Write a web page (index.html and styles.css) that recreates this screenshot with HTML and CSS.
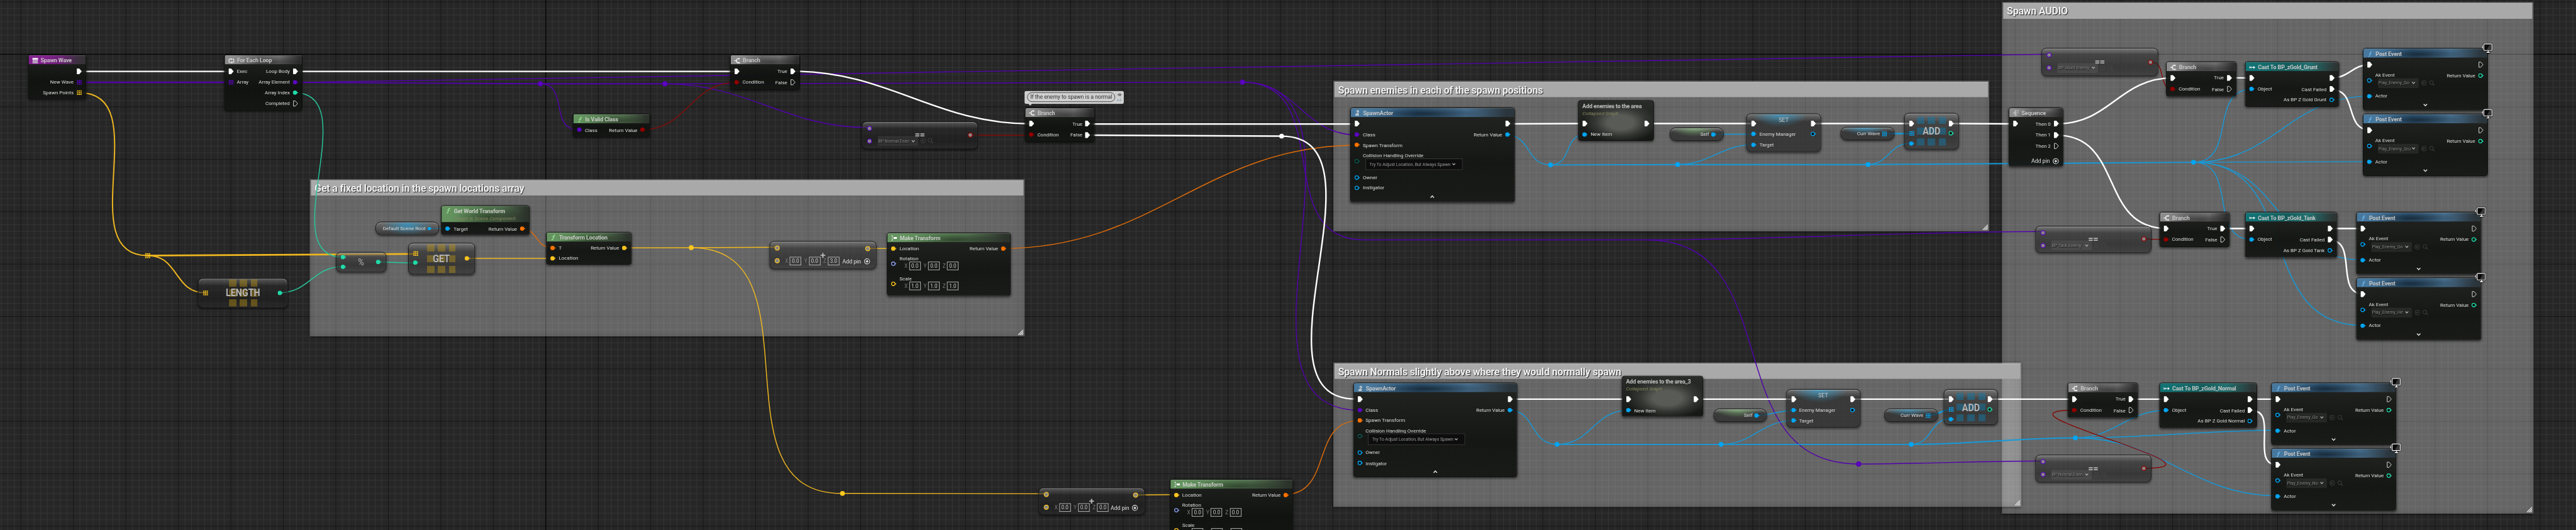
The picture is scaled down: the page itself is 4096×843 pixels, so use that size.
FILE: index.html
```html
<!DOCTYPE html>
<html lang="en">
<head>
<meta charset="utf-8">
<title>Spawn Wave - Event Graph</title>
<link rel="stylesheet" href="styles.css">
</head>
<body>
<svg class="defs" aria-hidden="true">
  <symbol id="exec" viewBox="0 0 9 11"><path d="M1.2.8h3.3L8.6 5.5 4.5 10.2H1.2Q.5 10.2.5 9.500V1.500Q.5.8 1.2.8z" fill="#fff"/></symbol>
  <symbol id="exec-o" viewBox="0 0 9 11"><path d="M1.2 1.200h2.900L8 5.500 4.100 9.800H1.200z" fill="none" stroke="#ddd" stroke-width="1"/></symbol>
  <symbol id="dot" viewBox="0 0 9 11"><circle cx="3.600" cy="5.500" r="3.500" fill="currentColor"/><path d="M7 4l1.900 1.500L7 7z" fill="currentColor"/></symbol>
  <symbol id="ring" viewBox="0 0 9 11"><circle cx="3.600" cy="5.500" r="2.900" fill="#0b0d0c" stroke="currentColor" stroke-width="1.400"/><path d="M7 4l1.900 1.500L7 7z" fill="currentColor"/></symbol>
  <symbol id="ringc" viewBox="0 0 9 11"><circle cx="4.500" cy="5.500" r="3.500" fill="#868686" stroke="currentColor" stroke-width="1.300"/></symbol>
  <symbol id="arr" viewBox="0 0 9 11"><path d="M.7 1.800h2v2h-2zM3.500 1.800h2v2h-2zM6.300 1.800h2v2h-2zM.7 4.600h2v2h-2zM3.500 4.600h2v2h-2zM6.300 4.600h2v2h-2zM.7 7.400h2v2h-2zM3.500 7.400h2v2h-2zM6.300 7.400h2v2h-2z" fill="currentColor"/></symbol>
  <symbol id="fn" viewBox="0 0 10 10"><path d="M8 1.600Q6.300.4 5.600 2.600L4.300 7.800Q3.700 9.700 2 8.600M3.300 4.200H7" fill="none" stroke="currentColor" stroke-width="1.100"/></symbol>
  <symbol id="branch" viewBox="0 0 10 10"><path d="M0 5h3.200M8 1.700H6Q3.600 1.700 3.600 5T6 8.300h2" fill="none" stroke="#eee" stroke-width="1.500"/><path d="M7 0l2.600 1.700L7 3.400zM7 6.600l2.600 1.700L7 10z" fill="#eee"/></symbol>
  <symbol id="seq" viewBox="0 0 10 10"><path d="M0 5h3M3.600 1v8M4.500 1.700h1.800M7 1.700h3M4.500 5h1.800M7 5h2.200M4.500 8.300h1.800" fill="none" stroke="#ccc" stroke-width="1.400"/></symbol>
  <symbol id="loop" viewBox="0 0 11 10"><path d="M3.700 8H2.600Q1 8 1 6.300V3.600Q1 2 2.600 2H5M7.300 2h1.100Q10 2 10 3.700v2.700Q10 8 8.400 8H6" fill="none" stroke="#eee" stroke-width="1.500"/><path d="M4.600 0l2.600 2-2.600 2zM6.400 6L3.800 8l2.600 2z" fill="#eee"/></symbol>
  <symbol id="cast" viewBox="0 0 11 10"><path d="M.7 2.800v4.400M0 5h4M5 5h4" fill="none" stroke="#fff" stroke-width="1.300"/><path d="M3 3.300L5 5 3 6.700zM7.800 2.500L10.900 5 7.800 7.500z" fill="#fff"/></symbol>
  <symbol id="make" viewBox="0 0 10 10"><path d="M.8.8l2 2M.8 9.200l2-2M1 5h1.500" fill="none" stroke="#eee" stroke-width="1.300"/><rect x="4" y="3.300" width="5.800" height="3.200" rx="1" fill="#fff"/></symbol>
  <symbol id="actor" viewBox="0 0 10 10"><circle cx="5.200" cy="2.600" r="2.300" fill="#b9c6cf"/><path d="M3.500 4.500Q1 6 1.200 9.500h7.600Q8.500 7 6.500 5.500z" fill="#b9c6cf"/><path d="M4.500 2.200L3.300 6M6.500 8h3M8 6.500v3" stroke="#3c5f78" stroke-width=".8"/></symbol>
  <symbol id="event" viewBox="0 0 11 10"><rect x=".4" y="0" width="10.200" height="10" fill="#b99ac0"/><rect x=".4" y="0" width="10.200" height="3" fill="#f4eaf6"/></symbol>
  <symbol id="plus" viewBox="0 0 11 11"><circle cx="5.500" cy="5.500" r="4.300" fill="none" stroke="#ddd" stroke-width="1.100"/><path d="M5.500 3.300v4.400M3.300 5.500h4.400" stroke="#fff" stroke-width="1.300"/></symbol>
  <symbol id="chev" viewBox="0 0 8 6"><path d="M1.200 1.300L4 4.300l2.800-3" fill="none" stroke="currentColor" stroke-width="1.400"/></symbol>
  <symbol id="back" viewBox="0 0 10 10"><circle cx="5" cy="5" r="4.200" fill="none" stroke="currentColor" stroke-width=".9"/><path d="M7.200 5H3M4.800 3.200L3 5l1.800 1.800" fill="none" stroke="currentColor" stroke-width=".9"/></symbol>
  <symbol id="find" viewBox="0 0 10 10"><circle cx="4.200" cy="4.200" r="3.300" fill="none" stroke="currentColor" stroke-width=".9"/><path d="M6.600 6.600L9.500 9.500" stroke="currentColor" stroke-width="1.100"/></symbol>
  <symbol id="monitor" viewBox="0 0 20 17"><path d="M3.500 2L1 8h2l-1 5 3.500-6.500H3.700L5 2z" fill="#fff" stroke="#000" stroke-width=".6"/><path d="M12.500 12v3M9 15.300h7" stroke="#000" stroke-width="3.600"/><rect x="5" y="1" width="14" height="11.500" rx="1.500" fill="#000" stroke="#000" stroke-width="2"/><rect x="5.300" y="1.300" width="13.400" height="10.800" rx="1" fill="#0a0a0a" stroke="#fff" stroke-width="1.200"/><path d="M10 11.200L15 2.200h3v9z" fill="#3a3a3a"/><path d="M12.500 12.300v2.400M9.500 15.300h6" stroke="#fff" stroke-width="1.500"/></symbol>
  <symbol id="grip" viewBox="0 0 9 9"><path d="M0 9L9 0M3 9l6-6M6 9l3-3" stroke="#e4e4e4" stroke-width="1.300"/></symbol>
</svg>

<main class="graph">
  <svg class="grid" width="4241" height="873">
    <defs>
      <pattern id="cells" x="34" y="89.100" width="86.400" height="86.350" patternUnits="userSpaceOnUse">
        <path d="M11.300 0v87M22.100 0v87M32.900 0v87M43.700 0v87M54.500 0v87M65.300 0v87M76.100 0v87M0 11.300h87M0 22.100h87M0 32.900h87M0 43.700h87M0 54.500h87M0 65.300h87M0 76.100h87" stroke="#353535" stroke-width="1"/>
        <path d="M.5 0v87M0 .5h87" stroke="#161616" stroke-width="1.100"/>
      </pattern>
    </defs>
    <rect width="4241" height="873" fill="#262626"/>
    <rect width="4241" height="873" fill="url(#cells)"/>
    <path d="M0 89.400h4241M898.600 0v873" stroke="#000" stroke-width="1.100"/>
  </svg>

  <section class="comment" id="c-audio"><h2>Spawn AUDIO</h2><svg><use href="#grip"/></svg></section>
  <section class="comment" id="c-fixed"><h2>Get a fixed location in the spawn locations array</h2><svg><use href="#grip"/></svg></section>
  <section class="comment" id="c-spawn"><h2>Spawn enemies in each of the spawn positions</h2><svg><use href="#grip"/></svg></section>
  <section class="comment" id="c-normals"><h2>Spawn Normals slightly above where they would normally spawn</h2><svg><use href="#grip"/></svg></section>

  <svg class="wires" width="4241" height="873">
    <g class="w-purple">
      <path class="thick" d="M131 135.700H380"/>
      <path d="M490 135.700C730 135.700 3133 89.300 3373 89.300"/>
      <path class="mid" d="M490 135.700C620 135.700 760 138 889.700 138H1094.700"/>
      <path d="M889.700 138C936 138 905 213.700 951 213.700"/>
      <path d="M1094.700 138C1230 138 1294 210 1429 210"/>
      <path d="M1094.700 138L2045.500 135.300"/>
      <path d="M2045.500 135.300C2138 135.300 2143 222.300 2236 222.300"/>
      <path d="M2045.500 135.300C2289 135.300 1994 675.700 2238 675.700"/>
      <path d="M2045.500 135.300C2201 135.300 2090 395 2245 395H2710"/>
      <path d="M2710 395C2925 395 3145 381.300 3362 381.300"/>
      <path d="M2710 395C2949 395 2821 764.300 3060 764.300"/>
      <path d="M3060 764.300C3160 764.300 3262 759.300 3363 759.300"/>
      <circle cx="889.700" cy="138" r="4"/><circle cx="1094.700" cy="138" r="4"/><circle cx="2045.500" cy="135.300" r="4"/><circle cx="3060" cy="764.300" r="4"/>
    </g>
    <g class="w-orange">
      <path d="M1650 409.300C1902 409.300 1984 239.300 2236 239.300"/>
      <path d="M2114 814.700C2196 814.700 2156 692.700 2238 692.700"/>
      <path d="M857 376.300C886 376.300 881 408.300 910 408.300"/>
    </g>
    <g class="w-yellow">
      <path class="mid" d="M131 152.700C258 152.700 116 421 243 421"/>
      <path class="thick" d="M243 421L683 418.300"/>
      <path class="mid" d="M243 421C295 421 286 482.300 338 482.300"/>
      <path d="M768 425.700H910M1025 408.300L1138 408L1278 407.300M1430 409.300H1471M1385 812.700L1722 813.300M1873 815.300L1937 814.700"/>
      <path d="M1138 408C1355 408 1168 812.700 1385 812.700"/>
      <path class="sq" d="M239 417h2.200v2.200h-2.200zM242 417h2.200v2.200h-2.200zM245 417h2.200v2.200h-2.200zM239 420h2.200v2.200h-2.200zM242 420h2.200v2.200h-2.200zM245 420h2.200v2.200h-2.200zM239 423h2.200v2.200h-2.200zM242 423h2.200v2.200h-2.200zM245 423h2.200v2.200h-2.200z"/>
      <circle cx="1138" cy="408" r="4"/><circle cx="1387" cy="812.700" r="4"/>
    </g>
    <g class="w-green">
      <path d="M485 152.700C602 152.700 448 423.700 564.500 423.700"/>
      <path d="M460 482.300C509 482.300 515 439 564.500 439"/>
      <path d="M622 431.300L683 433.300"/>
    </g>
    <g class="w-blue">
      <path d="M707 376.300H740M2823 221H2887"/>
      <path class="thick" d="M3106 220H3145M3177 684C3191 684 3197 674.700 3211 674.700"/>
      <path d="M2480 222.300C2521 222.300 2512 271.700 2552.700 271.700"/>
      <path d="M2552.700 271.700C2589 271.700 2574 221.300 2610 221.300"/>
      <path class="mid" d="M2552.700 271.700L2762 271H3075.400C3240 271 3450 267.300 3611.300 267.300"/>
      <path d="M2762 271C2815 271 2834 238.300 2887 238.300"/>
      <path d="M3075.400 271C3110 271 3110 236 3145 236"/>
      <path d="M3611.300 267.300C3683 267.300 3636 146.700 3707.700 146.700"/>
      <path d="M3611.300 267.300C3744 267.300 3769 158.300 3902 158.300"/>
      <path d="M3611.300 267.300L3902 266.300"/>
      <path d="M3611.300 267.300C3685 267.300 3634 394.700 3707.700 394.700"/>
      <path d="M3611.300 267.300C3758 267.300 3744 428.300 3891 428.300"/>
      <path d="M3611.300 267.300C3794 267.300 3708 536.300 3891 536.300"/>
      <path d="M2484 675.700C2529 675.700 2518 732 2563.500 732"/>
      <path d="M2563.500 732C2621 732 2623 675.700 2681.500 675.700"/>
      <path class="mid" d="M2563.500 732H3146.600C3240 732 3323 721.300 3416.700 721.300"/>
      <path d="M2833.400 732C2886 732 2900 692.700 2953 692.700"/>
      <path d="M3146.600 732C3182 732 3176 690 3211 690"/>
      <path d="M3416.700 721.300C3482 721.300 3502 675.700 3567 675.700"/>
      <path d="M3416.700 721.300C3533 721.300 3635 708.700 3751 708.700"/>
      <path d="M3416.700 721.300C3560 721.300 3608 816.700 3751 816.700"/>
      <path d="M2894 684C2916 684 2931 675.700 2953 675.700"/>
      <circle cx="2552.700" cy="271.700" r="4"/><circle cx="2762" cy="271" r="4"/><circle cx="3075.400" cy="271" r="4"/><circle cx="3611.300" cy="267.300" r="4"/>
      <circle cx="2563.500" cy="732" r="4"/><circle cx="2833.400" cy="732" r="4"/><circle cx="3146.600" cy="732" r="4"/><circle cx="3416.700" cy="721.300" r="4"/>
    </g>
    <g class="w-red">
      <path d="M1056 213.700C1134 213.700 1135 135.700 1213 135.700"/>
      <path d="M1598 222.700H1699"/>
      <path d="M3541 102C3568 102 3551 146.700 3578 146.700"/>
      <path d="M3529 393.500L3567 394.700"/>
      <path d="M3529.400 771.300C3690 771.300 3255 675.700 3416 675.700"/>
    </g>
    <g class="w-white">
      <path d="M133 117.700H378M490 117.700H1210M1795 204.300H2232M2486 204L2606 203.500M2714 203.500H2885M2986 203.500H3145M3212 203.500L3315 204M3674 128.300H3703M3663 376.500H3703M3835 376.500H3891"/>
      <path d="M2490 657.500H2678M2796 657.500H2950M3052 657.500H3208M3278 657.500H3412M3511 657.500H3563M3708 657.500H3747"/>
      <path d="M1304 117.300C1464 117.300 1538 204 1698 204"/>
      <path d="M1795 222.700L2110 224.300C2295 224.300 2047 657.300 2232 657.300"/>
      <path d="M3385 204C3475 204 3488 128.300 3578 128.300"/>
      <path d="M3385 222.500C3497 222.500 3455 376.300 3567 376.300"/>
      <path d="M3839 128.300C3867 128.300 3874 106.300 3902 106.300"/>
      <path d="M3839 147.500C3882 147.500 3859 214.300 3902 214.300"/>
      <path d="M3835 395.500C3883 395.500 3843 484.300 3891 484.300"/>
      <path d="M3708 676.500C3751 676.500 3705 765.300 3748 765.300"/>
      <circle cx="2110" cy="224.300" r="4"/>
    </g>
  </svg>

  <article class="node purple" id="spawn-wave">
    <header><svg><use href="#event"/></svg>Spawn Wave</header>
    <div class="body"><div class="in"></div><div class="out">
      <div class="pin x"><svg><use href="#exec"/></svg></div>
      <div class="pin">New Wave<svg class="c-purple"><use href="#arr"/></svg></div>
      <div class="pin">Spawn Points<svg class="c-yellow"><use href="#arr"/></svg></div>
    </div></div>
  </article>

  <article class="node gray" id="for-each">
    <header><svg><use href="#loop"/></svg>For Each Loop</header>
    <div class="body"><div class="in">
      <div class="pin x"><svg><use href="#exec"/></svg>Exec</div>
      <div class="pin"><svg class="c-purple"><use href="#arr"/></svg>Array</div>
    </div><div class="out">
      <div class="pin x">Loop Body<svg><use href="#exec"/></svg></div>
      <div class="pin">Array Element<svg class="c-purple"><use href="#dot"/></svg></div>
      <div class="pin">Array Index<svg class="c-green"><use href="#dot"/></svg></div>
      <div class="pin x">Completed<svg><use href="#exec-o"/></svg></div>
    </div></div>
  </article>

  <article class="node gray" id="branch-valid">
    <header><svg><use href="#branch"/></svg>Branch</header>
    <div class="body"><div class="in">
      <div class="pin x"><svg><use href="#exec"/></svg></div>
      <div class="pin"><svg class="c-red"><use href="#dot"/></svg>Condition</div>
    </div><div class="out">
      <div class="pin x">True<svg><use href="#exec"/></svg></div>
      <div class="pin x">False<svg><use href="#exec-o"/></svg></div>
    </div></div>
  </article>

  <article class="node green" id="is-valid">
    <header><svg><use href="#fn"/></svg>Is Valid Class</header>
    <div class="body"><div class="in">
      <div class="pin"><svg class="c-purple"><use href="#dot"/></svg>Class</div>
    </div><div class="out">
      <div class="pin">Return Value<svg class="c-red"><use href="#dot"/></svg></div>
    </div></div>
  </article>

  <article class="node compact equal" id="eq-spawn">
    <div class="in">
      <div class="pin"><svg class="c-purple"><use href="#ringc"/></svg></div>
      <div class="pin"><svg class="c-purple"><use href="#ringc"/></svg><span class="asset">BP Normal Enen<svg><use href="#chev"/></svg></span><svg class="tool"><use href="#back"/></svg><svg class="tool"><use href="#find"/></svg></div>
    </div>
    <span class="op">==</span>
    <div class="out"><div class="pin"><svg class="c-red"><use href="#ringc"/></svg></div></div>
  </article>

  <aside class="bubble" id="note"><span>If the enemy to spawn is a normal</span><svg viewBox="0 0 8 16"><path d="M0 4h3M3 1.500v5M5.500 1.500v5M3 4h5M4 3h2v2H4z" stroke="#666" fill="none"/><path d="M0 13.500h7M1 11v3M6 10v4" stroke="#8aa0ae" fill="none"/></svg></aside>

  <article class="node gray" id="branch-normal">
    <header><svg><use href="#branch"/></svg>Branch</header>
    <div class="body"><div class="in">
      <div class="pin x"><svg><use href="#exec"/></svg></div>
      <div class="pin"><svg class="c-red"><use href="#dot"/></svg>Condition</div>
    </div><div class="out">
      <div class="pin x">True<svg><use href="#exec"/></svg></div>
      <div class="pin x">False<svg><use href="#exec"/></svg></div>
    </div></div>
  </article>

  <article class="node compact squares yellow-sq" id="length">
    <div class="in"><div class="pin"><svg class="c-yellow"><use href="#arr"/></svg></div></div>
    <i class="sq9"></i><span class="op">LENGTH</span>
    <div class="out"><div class="pin"><svg class="c-green"><use href="#dot"/></svg></div></div>
  </article>

  <article class="node compact" id="modulo">
    <div class="in">
      <div class="pin"><svg class="c-green"><use href="#dot"/></svg></div>
      <div class="pin"><svg class="c-green"><use href="#dot"/></svg></div>
    </div>
    <span class="op">%</span>
    <div class="out"><div class="pin"><svg class="c-green"><use href="#dot"/></svg></div></div>
  </article>

  <article class="node compact squares yellow-sq" id="get">
    <div class="in">
      <div class="pin"><svg class="c-yellow"><use href="#arr"/></svg></div>
      <div class="pin"><svg class="c-green"><use href="#dot"/></svg></div>
    </div>
    <i class="sq9"></i><span class="op">GET</span>
    <div class="out"><div class="pin"><svg class="c-yellow"><use href="#dot"/></svg></div></div>
  </article>

  <article class="node var blue-glow" id="scene-root">Default Scene Root<svg class="c-blue"><use href="#dot"/></svg></article>

  <article class="node green two-line" id="world-transform">
    <header><svg><use href="#fn"/></svg><div>Get World Transform<small>Target is Scene Component</small></div></header>
    <div class="body"><div class="in">
      <div class="pin"><svg class="c-blue"><use href="#dot"/></svg>Target</div>
    </div><div class="out">
      <div class="pin">Return Value<svg class="c-orange"><use href="#dot"/></svg></div>
    </div></div>
  </article>

  <article class="node green" id="transform-location">
    <header><svg><use href="#fn"/></svg>Transform Location</header>
    <div class="body"><div class="in">
      <div class="pin"><svg class="c-orange"><use href="#dot"/></svg>T</div>
      <div class="pin"><svg class="c-yellow"><use href="#dot"/></svg>Location</div>
    </div><div class="out">
      <div class="pin">Return Value<svg class="c-yellow"><use href="#dot"/></svg></div>
    </div></div>
  </article>

  <article class="node compact vector" id="add-upper">
    <div class="in">
      <div class="pin"><svg class="c-yellow"><use href="#ringc"/></svg></div>
      <div class="pin"><svg class="c-yellow"><use href="#ringc"/></svg><span class="vec">X<b>0.0</b>Y<b>0.0</b>Z<b>3.0</b></span></div>
    </div>
    <span class="op">+</span>
    <div class="out">
      <div class="pin"><svg class="c-yellow"><use href="#ringc"/></svg></div>
      <div class="pin addpin">Add pin<svg><use href="#plus"/></svg></div>
    </div>
  </article>

  <article class="node green" id="make-upper">
    <header><svg><use href="#make"/></svg>Make Transform</header>
    <div class="body"><div class="in">
      <div class="pin"><svg class="c-yellow"><use href="#dot"/></svg>Location</div>
      <div class="pin tall"><svg class="c-lilac"><use href="#ring"/></svg><div><label>Rotation</label><span class="vec">X<b>0.0</b>Y<b>0.0</b>Z<b>0.0</b></span></div></div>
      <div class="pin tall"><svg class="c-yellow"><use href="#ring"/></svg><div><label>Scale</label><span class="vec">X<b>1.0</b>Y<b>1.0</b>Z<b>1.0</b></span></div></div>
    </div><div class="out">
      <div class="pin">Return Value<svg class="c-orange"><use href="#dot"/></svg></div>
    </div></div>
  </article>

  <article class="node compact vector" id="add-lower">
    <div class="in">
      <div class="pin"><svg class="c-yellow"><use href="#ringc"/></svg></div>
      <div class="pin"><svg class="c-yellow"><use href="#ringc"/></svg><span class="vec">X<b>0.0</b>Y<b>0.0</b>Z<b>0.0</b></span></div>
    </div>
    <span class="op">+</span>
    <div class="out">
      <div class="pin"><svg class="c-yellow"><use href="#ringc"/></svg></div>
      <div class="pin addpin">Add pin<svg><use href="#plus"/></svg></div>
    </div>
  </article>

  <article class="node green" id="make-lower">
    <header><svg><use href="#make"/></svg>Make Transform</header>
    <div class="body"><div class="in">
      <div class="pin"><svg class="c-yellow"><use href="#dot"/></svg>Location</div>
      <div class="pin tall"><svg class="c-lilac"><use href="#ring"/></svg><div><label>Rotation</label><span class="vec">X<b>0.0</b>Y<b>0.0</b>Z<b>0.0</b></span></div></div>
      <div class="pin tall"><svg class="c-yellow"><use href="#ring"/></svg><div><label>Scale</label><span class="vec"><i></i><b></b><i></i><b></b><i></i><b></b></span></div></div>
    </div><div class="out">
      <div class="pin">Return Value<svg class="c-orange"><use href="#dot"/></svg></div>
    </div></div>
  </article>

  <article class="node blue spawner" id="spawn-upper">
    <header><svg><use href="#actor"/></svg>SpawnActor</header>
    <div class="body"><div class="in">
      <div class="pin x"><svg><use href="#exec"/></svg></div>
      <div class="pin"><svg class="c-purple"><use href="#dot"/></svg>Class</div>
      <div class="pin"><svg class="c-orange"><use href="#dot"/></svg>Spawn Transform</div>
      <div class="pin tall"><svg class="c-teal"><use href="#ring"/></svg><div><label>Collision Handling Override</label><span class="select">Try To Adjust Location, But Always Spawn<svg><use href="#chev"/></svg></span></div></div>
      <div class="pin"><svg class="c-blue"><use href="#ring"/></svg>Owner</div>
      <div class="pin"><svg class="c-blue"><use href="#ring"/></svg>Instigator</div>
    </div><div class="out">
      <div class="pin x"><svg><use href="#exec"/></svg></div>
      <div class="pin">Return Value<svg class="c-blue"><use href="#dot"/></svg></div>
    </div></div>
    <svg class="fold up"><use href="#chev"/></svg>
  </article>

  <article class="node collapsed" id="area-upper">
    <h3>Add enemies to the area</h3><small>Collapsed Graph</small>
    <div class="body"><div class="in">
      <div class="pin x"><svg><use href="#exec"/></svg></div>
      <div class="pin"><svg class="c-blue"><use href="#dot"/></svg>New Item</div>
    </div><div class="out"><div class="pin x"><svg><use href="#exec"/></svg></div></div></div>
  </article>

  <article class="node var green-glow" id="self-upper">Self<svg class="c-blue"><use href="#dot"/></svg></article>

  <article class="node compact blue-glow set" id="set-upper">
    <div class="in">
      <div class="pin x"><svg><use href="#exec"/></svg></div>
      <div class="pin"><svg class="c-blue"><use href="#dot"/></svg>Enemy Manager</div>
      <div class="pin"><svg class="c-blue"><use href="#dot"/></svg>Target</div>
    </div>
    <span class="op">SET</span>
    <div class="out">
      <div class="pin x"><svg><use href="#exec"/></svg></div>
      <div class="pin"><svg class="c-blue"><use href="#ring"/></svg></div>
    </div>
  </article>

  <article class="node var blue-glow" id="wave-upper">Curr Wave<svg class="c-blue"><use href="#arr"/></svg></article>

  <article class="node compact squares blue-sq add" id="addto-upper">
    <div class="in">
      <div class="pin"><svg><use href="#exec"/></svg></div>
      <div class="pin"><svg class="c-blue"><use href="#arr"/></svg></div>
      <div class="pin"><svg class="c-blue"><use href="#dot"/></svg></div>
    </div>
    <i class="sq9"></i><span class="op">ADD</span>
    <div class="out">
      <div class="pin"><svg><use href="#exec"/></svg></div>
      <div class="pin"><svg class="c-green"><use href="#ring"/></svg></div>
    </div>
  </article>

  <article class="node gray" id="sequence">
    <header><svg><use href="#seq"/></svg>Sequence</header>
    <div class="body"><div class="in">
      <div class="pin x"><svg><use href="#exec"/></svg></div>
    </div><div class="out">
      <div class="pin x">Then 0<svg><use href="#exec"/></svg></div>
      <div class="pin x">Then 1<svg><use href="#exec"/></svg></div>
      <div class="pin x">Then 2<svg><use href="#exec-o"/></svg></div>
      <div class="pin addpin">Add pin<svg><use href="#plus"/></svg></div>
    </div></div>
  </article>

  <article class="node compact equal" id="eq-grunt">
    <div class="in">
      <div class="pin"><svg class="c-purple"><use href="#ringc"/></svg></div>
      <div class="pin"><svg class="c-purple"><use href="#ringc"/></svg><span class="asset">BP Grunt Enemy<svg><use href="#chev"/></svg></span><svg class="tool"><use href="#back"/></svg><svg class="tool"><use href="#find"/></svg></div>
    </div>
    <span class="op">==</span>
    <div class="out"><div class="pin"><svg class="c-red"><use href="#ringc"/></svg></div></div>
  </article>

  <article class="node compact equal" id="eq-tank">
    <div class="in">
      <div class="pin"><svg class="c-purple"><use href="#ringc"/></svg></div>
      <div class="pin"><svg class="c-purple"><use href="#ringc"/></svg><span class="asset">BP Tank Enemy<svg><use href="#chev"/></svg></span><svg class="tool"><use href="#back"/></svg><svg class="tool"><use href="#find"/></svg></div>
    </div>
    <span class="op">==</span>
    <div class="out"><div class="pin"><svg class="c-red"><use href="#ringc"/></svg></div></div>
  </article>

  <article class="node compact equal" id="eq-normal">
    <div class="in">
      <div class="pin"><svg class="c-purple"><use href="#ringc"/></svg></div>
      <div class="pin"><svg class="c-purple"><use href="#ringc"/></svg><span class="asset">BP Normal Enen<svg><use href="#chev"/></svg></span><svg class="tool"><use href="#back"/></svg><svg class="tool"><use href="#find"/></svg></div>
    </div>
    <span class="op">==</span>
    <div class="out"><div class="pin"><svg class="c-red"><use href="#ringc"/></svg></div></div>
  </article>

  <article class="node gray" id="branch-grunt">
    <header><svg><use href="#branch"/></svg>Branch</header>
    <div class="body"><div class="in">
      <div class="pin x"><svg><use href="#exec"/></svg></div>
      <div class="pin"><svg class="c-red"><use href="#dot"/></svg>Condition</div>
    </div><div class="out">
      <div class="pin x">True<svg><use href="#exec"/></svg></div>
      <div class="pin x">False<svg><use href="#exec-o"/></svg></div>
    </div></div>
  </article>

  <article class="node gray" id="branch-tank">
    <header><svg><use href="#branch"/></svg>Branch</header>
    <div class="body"><div class="in">
      <div class="pin x"><svg><use href="#exec"/></svg></div>
      <div class="pin"><svg class="c-red"><use href="#dot"/></svg>Condition</div>
    </div><div class="out">
      <div class="pin x">True<svg><use href="#exec"/></svg></div>
      <div class="pin x">False<svg><use href="#exec-o"/></svg></div>
    </div></div>
  </article>

  <article class="node gray" id="branch-audio-normal">
    <header><svg><use href="#branch"/></svg>Branch</header>
    <div class="body"><div class="in">
      <div class="pin x"><svg><use href="#exec"/></svg></div>
      <div class="pin"><svg class="c-red"><use href="#dot"/></svg>Condition</div>
    </div><div class="out">
      <div class="pin x">True<svg><use href="#exec"/></svg></div>
      <div class="pin x">False<svg><use href="#exec-o"/></svg></div>
    </div></div>
  </article>

  <article class="node teal" id="cast-grunt">
    <header><svg><use href="#cast"/></svg>Cast To BP_zGold_Grunt</header>
    <div class="body"><div class="in">
      <div class="pin x"><svg><use href="#exec"/></svg></div>
      <div class="pin"><svg class="c-blue"><use href="#dot"/></svg>Object</div>
    </div><div class="out">
      <div class="pin x"><svg><use href="#exec"/></svg></div>
      <div class="pin x">Cast Failed<svg><use href="#exec"/></svg></div>
      <div class="pin">As BP Z Gold Grunt<svg class="c-blue"><use href="#ring"/></svg></div>
    </div></div>
  </article>

  <article class="node teal" id="cast-tank">
    <header><svg><use href="#cast"/></svg>Cast To BP_zGold_Tank</header>
    <div class="body"><div class="in">
      <div class="pin x"><svg><use href="#exec"/></svg></div>
      <div class="pin"><svg class="c-blue"><use href="#dot"/></svg>Object</div>
    </div><div class="out">
      <div class="pin x"><svg><use href="#exec"/></svg></div>
      <div class="pin x">Cast Failed<svg><use href="#exec"/></svg></div>
      <div class="pin">As BP Z Gold Tank<svg class="c-blue"><use href="#ring"/></svg></div>
    </div></div>
  </article>

  <article class="node teal" id="cast-normal">
    <header><svg><use href="#cast"/></svg>Cast To BP_zGold_Normal</header>
    <div class="body"><div class="in">
      <div class="pin x"><svg><use href="#exec"/></svg></div>
      <div class="pin"><svg class="c-blue"><use href="#dot"/></svg>Object</div>
    </div><div class="out">
      <div class="pin x"><svg><use href="#exec"/></svg></div>
      <div class="pin x">Cast Failed<svg><use href="#exec"/></svg></div>
      <div class="pin">As BP Z Gold Normal<svg class="c-blue"><use href="#ring"/></svg></div>
    </div></div>
  </article>

  <article class="node blue post" id="post-grunt-1">
    <header><svg><use href="#fn"/></svg>Post Event</header>
    <div class="body"><div class="in">
      <div class="pin x"><svg><use href="#exec"/></svg></div>
      <div class="pin tall"><svg class="c-blue"><use href="#ring"/></svg><div><label>Ak Event</label><span class="pick"><span class="asset">Play_Enemy_Go<svg><use href="#chev"/></svg></span><svg class="tool"><use href="#back"/></svg><svg class="tool"><use href="#find"/></svg></span></div></div>
      <div class="pin"><svg class="c-blue"><use href="#dot"/></svg>Actor</div>
    </div><div class="out">
      <div class="pin x"><svg><use href="#exec-o"/></svg></div>
      <div class="pin">Return Value<svg class="c-green"><use href="#ring"/></svg></div>
    </div></div>
    <svg class="fold"><use href="#chev"/></svg><svg class="badge"><use href="#monitor"/></svg>
  </article>

  <article class="node blue post" id="post-grunt-2">
    <header><svg><use href="#fn"/></svg>Post Event</header>
    <div class="body"><div class="in">
      <div class="pin x"><svg><use href="#exec"/></svg></div>
      <div class="pin tall"><svg class="c-blue"><use href="#ring"/></svg><div><label>Ak Event</label><span class="pick"><span class="asset">Play_Enemy_Gru<svg><use href="#chev"/></svg></span><svg class="tool"><use href="#back"/></svg><svg class="tool"><use href="#find"/></svg></span></div></div>
      <div class="pin"><svg class="c-blue"><use href="#dot"/></svg>Actor</div>
    </div><div class="out">
      <div class="pin x"><svg><use href="#exec-o"/></svg></div>
      <div class="pin">Return Value<svg class="c-green"><use href="#ring"/></svg></div>
    </div></div>
    <svg class="fold"><use href="#chev"/></svg><svg class="badge"><use href="#monitor"/></svg>
  </article>

  <article class="node blue post" id="post-tank-1">
    <header><svg><use href="#fn"/></svg>Post Event</header>
    <div class="body"><div class="in">
      <div class="pin x"><svg><use href="#exec"/></svg></div>
      <div class="pin tall"><svg class="c-blue"><use href="#ring"/></svg><div><label>Ak Event</label><span class="pick"><span class="asset">Play_Enemy_Go<svg><use href="#chev"/></svg></span><svg class="tool"><use href="#back"/></svg><svg class="tool"><use href="#find"/></svg></span></div></div>
      <div class="pin"><svg class="c-blue"><use href="#dot"/></svg>Actor</div>
    </div><div class="out">
      <div class="pin x"><svg><use href="#exec-o"/></svg></div>
      <div class="pin">Return Value<svg class="c-green"><use href="#ring"/></svg></div>
    </div></div>
    <svg class="fold"><use href="#chev"/></svg><svg class="badge"><use href="#monitor"/></svg>
  </article>

  <article class="node blue post" id="post-tank-2">
    <header><svg><use href="#fn"/></svg>Post Event</header>
    <div class="body"><div class="in">
      <div class="pin x"><svg><use href="#exec"/></svg></div>
      <div class="pin tall"><svg class="c-blue"><use href="#ring"/></svg><div><label>Ak Event</label><span class="pick"><span class="asset">Play_Enemy_He<svg><use href="#chev"/></svg></span><svg class="tool"><use href="#back"/></svg><svg class="tool"><use href="#find"/></svg></span></div></div>
      <div class="pin"><svg class="c-blue"><use href="#dot"/></svg>Actor</div>
    </div><div class="out">
      <div class="pin x"><svg><use href="#exec-o"/></svg></div>
      <div class="pin">Return Value<svg class="c-green"><use href="#ring"/></svg></div>
    </div></div>
    <svg class="fold"><use href="#chev"/></svg><svg class="badge"><use href="#monitor"/></svg>
  </article>

  <article class="node blue post" id="post-normal-1">
    <header><svg><use href="#fn"/></svg>Post Event</header>
    <div class="body"><div class="in">
      <div class="pin x"><svg><use href="#exec"/></svg></div>
      <div class="pin tall"><svg class="c-blue"><use href="#ring"/></svg><div><label>Ak Event</label><span class="pick"><span class="asset">Play_Enemy_Go<svg><use href="#chev"/></svg></span><svg class="tool"><use href="#back"/></svg><svg class="tool"><use href="#find"/></svg></span></div></div>
      <div class="pin"><svg class="c-blue"><use href="#dot"/></svg>Actor</div>
    </div><div class="out">
      <div class="pin x"><svg><use href="#exec-o"/></svg></div>
      <div class="pin">Return Value<svg class="c-green"><use href="#ring"/></svg></div>
    </div></div>
    <svg class="fold"><use href="#chev"/></svg><svg class="badge"><use href="#monitor"/></svg>
  </article>

  <article class="node blue post" id="post-normal-2">
    <header><svg><use href="#fn"/></svg>Post Event</header>
    <div class="body"><div class="in">
      <div class="pin x"><svg><use href="#exec"/></svg></div>
      <div class="pin tall"><svg class="c-blue"><use href="#ring"/></svg><div><label>Ak Event</label><span class="pick"><span class="asset">Play_Enemy_No<svg><use href="#chev"/></svg></span><svg class="tool"><use href="#back"/></svg><svg class="tool"><use href="#find"/></svg></span></div></div>
      <div class="pin"><svg class="c-blue"><use href="#dot"/></svg>Actor</div>
    </div><div class="out">
      <div class="pin x"><svg><use href="#exec-o"/></svg></div>
      <div class="pin">Return Value<svg class="c-green"><use href="#ring"/></svg></div>
    </div></div>
    <svg class="fold"><use href="#chev"/></svg><svg class="badge"><use href="#monitor"/></svg>
  </article>

  <article class="node blue spawner" id="spawn-lower">
    <header><svg><use href="#actor"/></svg>SpawnActor</header>
    <div class="body"><div class="in">
      <div class="pin x"><svg><use href="#exec"/></svg></div>
      <div class="pin"><svg class="c-purple"><use href="#dot"/></svg>Class</div>
      <div class="pin"><svg class="c-orange"><use href="#dot"/></svg>Spawn Transform</div>
      <div class="pin tall"><svg class="c-teal"><use href="#ring"/></svg><div><label>Collision Handling Override</label><span class="select">Try To Adjust Location, But Always Spawn<svg><use href="#chev"/></svg></span></div></div>
      <div class="pin"><svg class="c-blue"><use href="#ring"/></svg>Owner</div>
      <div class="pin"><svg class="c-blue"><use href="#ring"/></svg>Instigator</div>
    </div><div class="out">
      <div class="pin x"><svg><use href="#exec"/></svg></div>
      <div class="pin">Return Value<svg class="c-blue"><use href="#dot"/></svg></div>
    </div></div>
    <svg class="fold up"><use href="#chev"/></svg>
  </article>

  <article class="node collapsed" id="area-lower">
    <h3>Add enemies to the area_3</h3><small>Collapsed Graph</small>
    <div class="body"><div class="in">
      <div class="pin x"><svg><use href="#exec"/></svg></div>
      <div class="pin"><svg class="c-blue"><use href="#dot"/></svg>New Item</div>
    </div><div class="out"><div class="pin x"><svg><use href="#exec"/></svg></div></div></div>
  </article>

  <article class="node var green-glow" id="self-lower">Self<svg class="c-blue"><use href="#dot"/></svg></article>

  <article class="node compact blue-glow set" id="set-lower">
    <div class="in">
      <div class="pin x"><svg><use href="#exec"/></svg></div>
      <div class="pin"><svg class="c-blue"><use href="#dot"/></svg>Enemy Manager</div>
      <div class="pin"><svg class="c-blue"><use href="#dot"/></svg>Target</div>
    </div>
    <span class="op">SET</span>
    <div class="out">
      <div class="pin x"><svg><use href="#exec"/></svg></div>
      <div class="pin"><svg class="c-blue"><use href="#ring"/></svg></div>
    </div>
  </article>

  <article class="node var blue-glow" id="wave-lower">Curr Wave<svg class="c-blue"><use href="#arr"/></svg></article>

  <article class="node compact squares blue-sq add" id="addto-lower">
    <div class="in">
      <div class="pin"><svg><use href="#exec"/></svg></div>
      <div class="pin"><svg class="c-blue"><use href="#arr"/></svg></div>
      <div class="pin"><svg class="c-blue"><use href="#dot"/></svg></div>
    </div>
    <i class="sq9"></i><span class="op">ADD</span>
    <div class="out">
      <div class="pin"><svg><use href="#exec"/></svg></div>
      <div class="pin"><svg class="c-green"><use href="#ring"/></svg></div>
    </div>
  </article>
</main>
</body>
</html>
```
FILE: styles.css
```css
* { box-sizing: border-box; }
html, body { margin: 0; height: 100%; overflow: hidden; background: #262626; }
body { font-family: Roboto, "Liberation Sans", sans-serif; }
.defs { position: absolute; width: 0; height: 0; }

.graph {
  position: relative;
  width: 4241px;
  height: 873px;
  overflow: hidden;
  transform: scale(.96581, .96564);
  transform-origin: 0 0;
}
.grid, .wires { position: absolute; inset: 0; }

/* comment boxes */
.comment {
  position: absolute;
  padding: 2px;
  background: rgba(255, 255, 255, .29);
  box-shadow: inset 0 0 9px rgba(0, 0, 0, .18), 0 1px 4px rgba(0, 0, 0, .6);
}
.comment h2 {
  margin: 0;
  height: 25px;
  padding-left: 6px;
  background: #a9a9a9;
  border-top: 1px solid #bdbdbd;
  color: #f0f0f0;
  font-size: 16.500px;
  font-weight: 700;
  letter-spacing: -.2px;
  line-height: 25px;
  white-space: nowrap;
  text-shadow: 1px 1px 1px #222;
}
.comment > svg { position: absolute; right: 2px; bottom: 2px; width: 9px; height: 9px; }
#c-fixed { left: 510px; top: 295px; width: 1176.500px; height: 259px; }
#c-spawn { left: 2195px; top: 133.300px; width: 1080px; height: 248px; }
#c-normals { left: 2195px; top: 597.300px; width: 1133px; height: 238px; }
#c-audio { left: 3296px; top: 2.700px; width: 875px; height: 843px; }
#c-audio h2 { height: 26px; }

/* wires */
.wires path { fill: none; stroke-width: 1.500; }
.wires .mid { stroke-width: 2; }
.wires .thick { stroke-width: 2.700; }
.w-purple { stroke: #5203ac; }
.w-purple circle { fill: #5b06c0; }
.w-orange { stroke: #e06c0a; }
.w-yellow { stroke: #f0b820; }
.w-yellow circle { fill: #ffc81e; stroke: none; }
.wires .sq { fill: #ffc81e; stroke: none; }
.w-green { stroke: #27c79b; }
.w-blue { stroke: #159ada; }
.w-blue circle { fill: #04a5f2; stroke: none; }
.w-red { stroke: #850d0a; }
.w-white { stroke: #fff; }
.w-white path { stroke-width: 2.500; }
.w-white circle { fill: #fff; stroke: none; }

/* pin colours */
.c-purple { color: #5b06c0; }
.c-yellow { color: #fdc51f; }
.c-green { color: #20dba8; }
.c-red { color: #930000; }
.c-blue { color: #04a5f2; }
.c-orange { color: #ff7200; }
.c-teal { color: #0c5a50; }
.c-lilac { color: #8aa0f0; }

/* nodes */
.node {
  position: absolute;
  border-radius: 4.500px;
  border: 1px solid #0b0c0b;
  background: linear-gradient(rgba(31, 33, 30, .95), rgba(15, 17, 14, .93) 60%, rgba(19, 21, 18, .93));
  box-shadow: 0 2px 4px rgba(0, 0, 0, .55);
  color: #dedede;
  font-size: 8.300px;
  white-space: nowrap;
}
.node header {
  display: flex;
  align-items: center;
  gap: 4px;
  height: 15px;
  padding: 1px 6px 0;
  border-radius: 3.500px 3.500px 0 0;
  border-top: 1px solid rgba(255, 255, 255, .25);
  color: #c6c6c6;
  font-size: 9.300px;
  font-weight: 700;
  letter-spacing: -.14px;
}
.node header svg { width: 10px; height: 10px; flex: none; }
.gray header { background: radial-gradient(ellipse 45% 70% at 60% 80%, rgba(0,0,0,.4), transparent), linear-gradient(100deg, #8c8c8c 10%, #636363 45%, #6e6e6e 70%, #2e2e2e 95%); }
.purple header { background: linear-gradient(95deg, #80208c 30%, #6c1f76 55%, #3d3040 85%, #333); }
.green header { background: radial-gradient(ellipse 40% 70% at 55% 70%, rgba(0,0,0,.4), transparent), linear-gradient(100deg, #64935f 10%, #53794f 50%, #52704f 65%, #2c332b 95%); color: #c9cfc6; }
.blue header { background: radial-gradient(ellipse 35% 70% at 45% 60%, rgba(0,0,0,.5), transparent), linear-gradient(100deg, #47779c 10%, #2f5676 40%, #456c8b 70%, #2b353c 95%); }
.teal header { background: linear-gradient(100deg, #137273 10%, #155c5c 45%, #21706f 68%, #2d3635 95%); }
.green header svg { color: #9ee89a; }
.blue header svg { color: #6ebcf5; }
.body { display: flex; justify-content: space-between; padding: 2px 6px 0; }
.in, .out { display: flex; flex-direction: column; }
.out { align-items: flex-end; }
.pin { display: flex; align-items: center; gap: 4.500px; height: 17.200px; }
.pin.x { height: 18.400px; }
.pin > svg { width: 9px; height: 11px; flex: none; }
.pin.tall { height: 34px; }
.pin.tall > div { align-self: flex-start; display: flex; flex-direction: column; }
.pin label { height: 13.500px; line-height: 17px; }
.spawner .pin.tall { height: 36px; }
#make-upper .pin.tall, #make-lower .pin.tall { height: 33px; }

/* embedded fields */
.select {
  display: flex;
  align-items: center;
  justify-content: space-between;
  width: 160px;
  height: 19px;
  margin-left: 4px;
  padding: 0 10px 0 6px;
  background: #0d0d0d;
  border: 1px solid #373737;
  color: #9b9b9b;
  font-size: 7.200px;
}
.select svg, .asset svg { width: 7px; height: 5px; flex: none; color: #bbb; }
.pick { display: flex; align-items: center; gap: 4px; margin-left: 4px; }
.asset {
  display: flex;
  align-items: center;
  justify-content: space-between;
  width: 67px;
  height: 16px;
  padding: 0 4.500px 0 1.500px;
  background: rgba(255, 255, 255, .07);
  border-radius: 2px;
  color: #8c8c8c;
  font-size: 7.200px;
  text-shadow: .5px 1px 1px #000;
}
.node svg.tool { width: 9.500px; height: 9.500px; color: #494949; flex: none; }
.vec { display: flex; align-items: center; gap: 2.400px; margin-left: 8px; color: #7a7a7a; font-size: 8.500px; }
.vec i { width: 5.500px; }
.vec b {
  width: 19px;
  height: 14px;
  margin-right: 2.400px;
  border: 1px solid #b5b5b5;
  color: #ccc;
  font-weight: 400;
  line-height: 12.500px;
  text-align: center;
}
.addpin { font-size: 9px; gap: 4px; color: #e4e4e4; }
.node .addpin > svg { width: 11px; height: 11px; }
#sequence .addpin { margin-top: 7px; }
.fold { position: absolute; left: 50%; bottom: 5px; width: 8px; height: 6px; margin-left: -4px; color: #e8e8e8; }
.fold.up { transform: rotate(180deg); }
.badge { position: absolute; right: -9px; top: -9px; width: 20px; height: 17px; }

/* collapsed graph nodes */
.collapsed {
  background: radial-gradient(ellipse 50% 52% at 56% 55%, rgba(92, 94, 90, .95) 35%, rgba(66, 68, 64, .6) 68%, transparent 100%), linear-gradient(#2a2c29, #151714);
}
.collapsed h3 { margin: 0; padding: 3px 6px 0; font-size: 9.300px; line-height: 12px; color: #c0c0c0; letter-spacing: -.17px; }
.collapsed small, .two-line small { display: block; color: #86875f; font-size: 8.400px; font-style: italic; line-height: 11px; font-weight: 400; letter-spacing: 0; }
.two-line small { letter-spacing: .08px; }
.collapsed small { padding-left: 6px; }
.collapsed .body { padding-top: 2.500px; }
.two-line header { height: 27px; align-items: flex-start; padding-top: 2px; }
.two-line header > div { line-height: 12px; }

/* compact operator nodes */
.compact, .var {
  border-radius: 8px;
  border-color: #161616;
  background: linear-gradient(rgba(130, 130, 130, .55), rgba(40, 40, 40, .55) 25%, rgba(26, 26, 26, .6) 70%, rgba(40, 40, 40, .6));
  box-shadow: inset 0 1px 1px rgba(255, 255, 255, .35), 0 2px 4px rgba(0, 0, 0, .55);
}
.compact { display: flex; justify-content: space-between; padding: 0 7px; }
.compact .op {
  position: absolute;
  inset: 0;
  display: flex;
  align-items: center;
  justify-content: center;
  color: #b4b4b4;
  font-size: 17px;
  font-weight: 700;
}
.squares .op { transform: scaleX(.87); }
.equal .pin { height: 21px; }
.equal .pin:has(.asset) { gap: 3px; }
.equal .asset { margin-left: 6px; letter-spacing: -.08px; }
.equal .out, #length .in, #length .out, #get .out, #modulo .out { justify-content: center; }
.equal .op { font-size: 15px; letter-spacing: -.3px; }
.vector .pin { height: 21px; }
.vector .out { padding-right: 2.500px; }
.vector .out .pin { height: 22.500px; }
.vector .vec { margin-left: 4.500px; }
.vector .op { font-size: 16px; }
#modulo .pin { height: 15.600px; }
#modulo .op { font-weight: 400; font-size: 16px; transform: scaleX(.85); }
#get .in { padding-top: 8.500px; }
#get .pin { height: 15.600px; }
.set .in, .set .out { padding-top: 6.500px; }
.set .op { align-items: flex-start; padding-top: 4px; font-size: 9.300px; font-weight: 400; color: #c8c8c8; }
.add .in, .add .out { padding-top: 7.500px; }
.add .pin { height: 16.500px; }
.sq9 {
  --s: rgba(190, 150, 20, .42);
  position: absolute;
  inset: 4px 0;
  width: 48px;
  margin: 0 auto;
  background: linear-gradient(90deg, var(--s) 12px, transparent 12px 18px, var(--s) 18px 30px, transparent 30px 36px, var(--s) 36px);
  mask: linear-gradient(#000 12px, transparent 12px calc(50% - 6px), #000 calc(50% - 6px) calc(50% + 6px), transparent calc(50% + 6px) calc(100% - 12px), #000 calc(100% - 12px));
}
.blue-sq .sq9 { --s: rgba(20, 120, 165, .5); inset: 5px 0; }
#length .sq9, #get .sq9 { inset: 1px 0; width: 47px; }

/* variable getters */
.var { display: flex; align-items: center; justify-content: flex-end; gap: 3px; padding: 0 11px; border-radius: 10px; }
.var svg { width: 9px; height: 11px; }
.blue-glow { background: radial-gradient(ellipse 45% 60% at 45% 0, rgba(55, 165, 215, .65), transparent), linear-gradient(rgba(120, 120, 120, .55), rgba(38, 38, 38, .7) 35%, rgba(38, 38, 38, .7)); }
.set.blue-glow { background: radial-gradient(ellipse 38% 34% at 45% 0, rgba(55, 165, 215, .7), transparent), linear-gradient(rgba(120, 120, 120, .55), rgba(38, 38, 38, .7) 20%, rgba(38, 38, 38, .7)); }
.green-glow { background: radial-gradient(ellipse 45% 70% at 45% 0, rgba(140, 200, 130, .65), transparent), linear-gradient(rgba(120, 120, 120, .55), rgba(38, 38, 38, .7) 35%, rgba(38, 38, 38, .7)); }
#scene-root { background: radial-gradient(ellipse 40% 80% at 50% 25%, rgba(50, 155, 205, .75), transparent), linear-gradient(rgba(120, 120, 120, .55), rgba(38, 38, 38, .7)); }

/* comment bubble */
.bubble {
  position: absolute;
  display: flex;
  align-items: center;
  gap: 3px;
  padding: 0 2px 0 3px;
  background: #cfcfcf;
  border: 1px solid #e2e2e2;
  border-radius: 2px;
  color: #2c2c2c;
  font-size: 9px;
  white-space: nowrap;
}
.bubble::after { content: ""; position: absolute; left: 5px; top: 20px; border: 3px solid transparent; border-top-color: #cfcfcf; }
.bubble span { width: 148px; height: 16px; border: 1px solid #444; border-radius: 8px; line-height: 14px; text-align: center; }
.bubble svg { width: 8px; height: 16px; }
#note { left: 1687px; top: 150px; width: 163px; height: 20.700px; }

/* node placement on the graph canvas */
#spawn-wave { left: 45.700px; top: 90.100px; width: 96px; height: 72.500px; }
#for-each { left: 369.300px; top: 90.100px; width: 128.400px; height: 91.500px; }
#branch-valid { left: 1201.900px; top: 90.100px; width: 114.800px; height: 57.800px; }
#is-valid { left: 942.500px; top: 187.100px; width: 127.500px; height: 37.500px; }
#eq-spawn { left: 1418.500px; top: 199.700px; width: 191.400px; height: 45px; }
#branch-normal { left: 1687.300px; top: 176.800px; width: 115.200px; height: 57px; }
#length { left: 326.400px; top: 457.700px; width: 148px; height: 49.500px; }
#modulo { left: 553.400px; top: 414.700px; width: 83px; height: 33.800px; }
#get { left: 672.400px; top: 400px; width: 109.200px; height: 51.700px; }
#scene-root { left: 618.200px; top: 365.300px; width: 104.500px; height: 22.200px; }
#world-transform { left: 726.200px; top: 338.300px; width: 145.500px; height: 48.500px; }
#transform-location { left: 899.400px; top: 381.700px; width: 140.400px; height: 54.300px; }
#add-upper { left: 1266.500px; top: 397.300px; width: 176.500px; height: 45.500px; }
#make-upper { left: 1460.400px; top: 382.500px; width: 203.400px; height: 104.500px; }
#add-lower { left: 1710px; top: 803.400px; width: 174.500px; height: 45px; }
#make-lower { left: 1925.800px; top: 788.500px; width: 203px; height: 104.500px; }
#spawn-upper { left: 2223.200px; top: 176.800px; width: 270.500px; height: 156px; }
#area-upper { left: 2598.200px; top: 165px; width: 124.800px; height: 67px; }
#self-upper { left: 2749.400px; top: 210px; width: 88.400px; height: 22.200px; }
#set-upper { left: 2875.300px; top: 186.500px; width: 122.400px; height: 63px; }
#wave-upper { left: 3030px; top: 209.300px; width: 89px; height: 21.800px; }
#addto-upper { left: 3134.800px; top: 186.300px; width: 90px; height: 59.500px; }
#sequence { left: 3307px; top: 176.500px; width: 89.800px; height: 97.300px; }
#eq-grunt { left: 3361.300px; top: 79.300px; width: 191.500px; height: 45.500px; }
#eq-tank { left: 3350.600px; top: 371.600px; width: 191.200px; height: 44.500px; }
#eq-normal { left: 3350.500px; top: 749.300px; width: 191.300px; height: 44.700px; }
#branch-grunt { left: 3566.300px; top: 101.100px; width: 115.500px; height: 57.800px; }
#branch-tank { left: 3555.300px; top: 349.100px; width: 115.500px; height: 57.800px; }
#branch-audio-normal { left: 3404.400px; top: 630.100px; width: 115.500px; height: 57.800px; }
#cast-grunt { left: 3696.300px; top: 101.100px; width: 154.400px; height: 75px; }
#cast-tank { left: 3696.300px; top: 349.100px; width: 151.400px; height: 75px; }
#cast-normal { left: 3555.200px; top: 630.100px; width: 161px; height: 75px; }
.post { width: 205.500px; height: 103px; }
#post-grunt-1 { left: 3890px; top: 79.100px; }
#post-grunt-2 { left: 3890px; top: 187.100px; }
#post-tank-1 { left: 3879.300px; top: 349.100px; }
#post-tank-2 { left: 3879.300px; top: 457.100px; }
#post-normal-1 { left: 3739.400px; top: 630.100px; }
#post-normal-2 { left: 3739.400px; top: 738.100px; }
#spawn-lower { left: 2227.700px; top: 630.100px; width: 270px; height: 156px; }
#area-lower { left: 2670px; top: 619.200px; width: 133.800px; height: 66.500px; }
#self-lower { left: 2821px; top: 673.300px; width: 88.400px; height: 22.200px; }
#set-lower { left: 2940.500px; top: 641px; width: 122px; height: 63px; }
#wave-lower { left: 3102px; top: 673.300px; width: 88.600px; height: 22px; }
#addto-lower { left: 3199.700px; top: 641px; width: 89.800px; height: 59px; }
```
